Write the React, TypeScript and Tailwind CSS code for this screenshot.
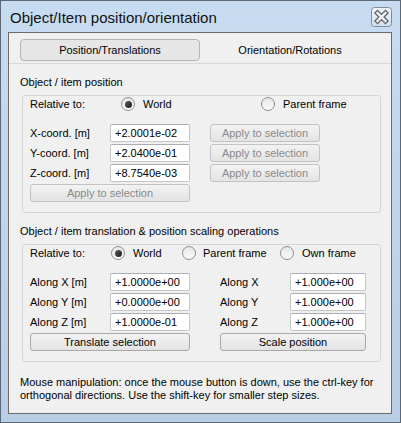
import React from 'react';

const font = { fontFamily: '"Liberation Sans", Arial, sans-serif' };

const Radio = ({ checked }: { checked?: boolean }) => (
  <span className="w-[14px] h-[14px] rounded-full border border-[#8e8f8f] bg-gradient-to-b from-[#e6e6e6] to-[#fbfbfb] flex items-center justify-center shrink-0">
    {checked && <span className="w-[7px] h-[7px] rounded-full bg-gradient-to-br from-[#5a5a5a] to-[#1e1e1e]" />}
  </span>
);

const Field = ({ value, w = 'w-[80px]' }: { value: string; w?: string }) => (
  <div className={`${w} h-[18px] bg-white border border-[#c5c5c5] border-t-[#abadb3] rounded-[2px] flex items-center pl-[4px] text-[11px] text-black`}>
    {value}
  </div>
);

const Button = ({ label, w, disabled }: { label: string; w: string; disabled?: boolean }) => (
  <div
    className={`${w} h-[18px] rounded-[3px] border ${disabled ? 'border-[#c2c2c2] text-[#8a8a8a]' : 'border-[#a8a8a8] text-black'} bg-gradient-to-b from-[#f3f3f3] to-[#e3e3e3] flex items-center justify-center text-[11px]`}
  >
    {label}
  </div>
);

const CloseIcon = () => (
  <svg width="21" height="20" viewBox="0 0 21 20">
    <defs>
      <linearGradient id="cb" x1="0" y1="0" x2="0" y2="1">
        <stop offset="0" stopColor="#eef4fa" />
        <stop offset="1" stopColor="#d3e0ec" />
      </linearGradient>
    </defs>
    <rect x="0.5" y="0.5" width="20" height="19" rx="3" fill="url(#cb)" stroke="#7f8c99" />
    <path d="M6.5 6 L14.5 14 M14.5 6 L6.5 14" stroke="#5f6770" strokeWidth="5" strokeLinecap="square" />
    <path d="M6.5 6 L14.5 14 M14.5 6 L6.5 14" stroke="#f4f6f8" strokeWidth="2.4" strokeLinecap="square" />
  </svg>
);

export default function App() {
  return (
    <div style={font} className="w-[401px] h-[423px] border border-[#5d6874] bg-gradient-to-b from-[#c7dcf1] to-[#b8cee4] flex flex-col">
      <div className="h-[31px] flex items-center justify-between pl-[9px] pr-[8px]">
        <span className="text-[15px] text-[#111] pt-[3px]">Object/Item position/orientation</span>
        <div className="mt-[1px]">
          <CloseIcon />
        </div>
      </div>

      <div className="ml-[7px] w-[384px] h-[382px] border border-[#6a6a6a] bg-[#f0f0f0] flex flex-col text-[11px] text-black">
        {/* tabs */}
        <div className="pt-[6px] border-b border-[#d9d9d9]">
          <div className="flex pl-[11px] h-[24px]">
            <div className="w-[180px] h-[22px] rounded-[4px] border border-[#b4b4b4] bg-[#e6e6e6] flex items-center justify-center text-[11px]">
              Position/Translations
            </div>
            <div className="w-[180px] h-[22px] flex items-center justify-center text-[11px]">Orientation/Rotations</div>
          </div>
        </div>

        {/* pane */}
        <div className="pl-[11px] flex flex-col">
          <div className="mt-[11px] h-[14px] leading-[14px]">Object / item position</div>
          <div className="mt-[6px] ml-[2px] w-[359px] border border-[#d5d5d5] rounded-[3px] pl-[7px] pb-[10px] flex flex-col">
            <div className="h-[16px] flex items-center">
              <span className="w-[91px]">Relative to:</span>
              <div className="w-[140px] flex items-center gap-[8px]">
                <Radio checked />
                <span>World</span>
              </div>
              <div className="flex items-center gap-[8px]">
                <Radio />
                <span>Parent frame</span>
              </div>
            </div>
            <div className="mt-[12px] flex flex-col gap-[2px]">
              {[
                ['X-coord. [m]', '+2.0001e-02'],
                ['Y-coord. [m]', '+2.0400e-01'],
                ['Z-coord. [m]', '+8.7540e-03'],
              ].map(([l, v]) => (
                <div key={l} className="flex items-center h-[18px]">
                  <span className="w-[80px]">{l}</span>
                  <Field value={v} />
                  <div className="ml-[20px]">
                    <Button label="Apply to selection" w="w-[110px]" disabled />
                  </div>
                </div>
              ))}
              <Button label="Apply to selection" w="w-[160px]" disabled />
            </div>
          </div>

          <div className="mt-[11px] h-[14px] leading-[14px]">Object / item translation &amp; position scaling operations</div>
          <div className="mt-[6px] ml-[2px] w-[359px] border border-[#d5d5d5] rounded-[3px] pl-[7px] pb-[10px] flex flex-col">
            <div className="h-[16px] flex items-center">
              <span className="w-[81px]">Relative to:</span>
              <div className="w-[71px] flex items-center gap-[8px]">
                <Radio checked />
                <span>World</span>
              </div>
              <div className="w-[98px] flex items-center gap-[7px]">
                <Radio />
                <span>Parent frame</span>
              </div>
              <div className="flex items-center gap-[8px]">
                <Radio />
                <span>Own frame</span>
              </div>
            </div>
            <div className="mt-[12px] flex flex-col gap-[2px]">
              {[
                ['Along X [m]', '+1.0000e+00', 'Along X', '+1.000e+00'],
                ['Along Y [m]', '+0.0000e+00', 'Along Y', '+1.000e+00'],
                ['Along Z [m]', '+1.0000e-01', 'Along Z', '+1.000e+00'],
              ].map(([l, v, l2, v2]) => (
                <div key={l} className="flex items-center h-[18px]">
                  <span className="w-[80px]">{l}</span>
                  <Field value={v} />
                  <span className="ml-[30px] w-[70px]">{l2}</span>
                  <Field value={v2} w="w-[76px]" />
                </div>
              ))}
              <div className="flex">
                <Button label="Translate selection" w="w-[160px]" />
                <div className="ml-[30px]">
                  <Button label="Scale position" w="w-[146px]" />
                </div>
              </div>
            </div>
          </div>

          <p className="mt-[14px] leading-[13px] w-[360px]">
            Mouse manipulation: once the mouse button is down, use the ctrl-key for orthogonal directions. Use the
            shift-key for smaller step sizes.
          </p>
        </div>
      </div>
    </div>
  );
}
